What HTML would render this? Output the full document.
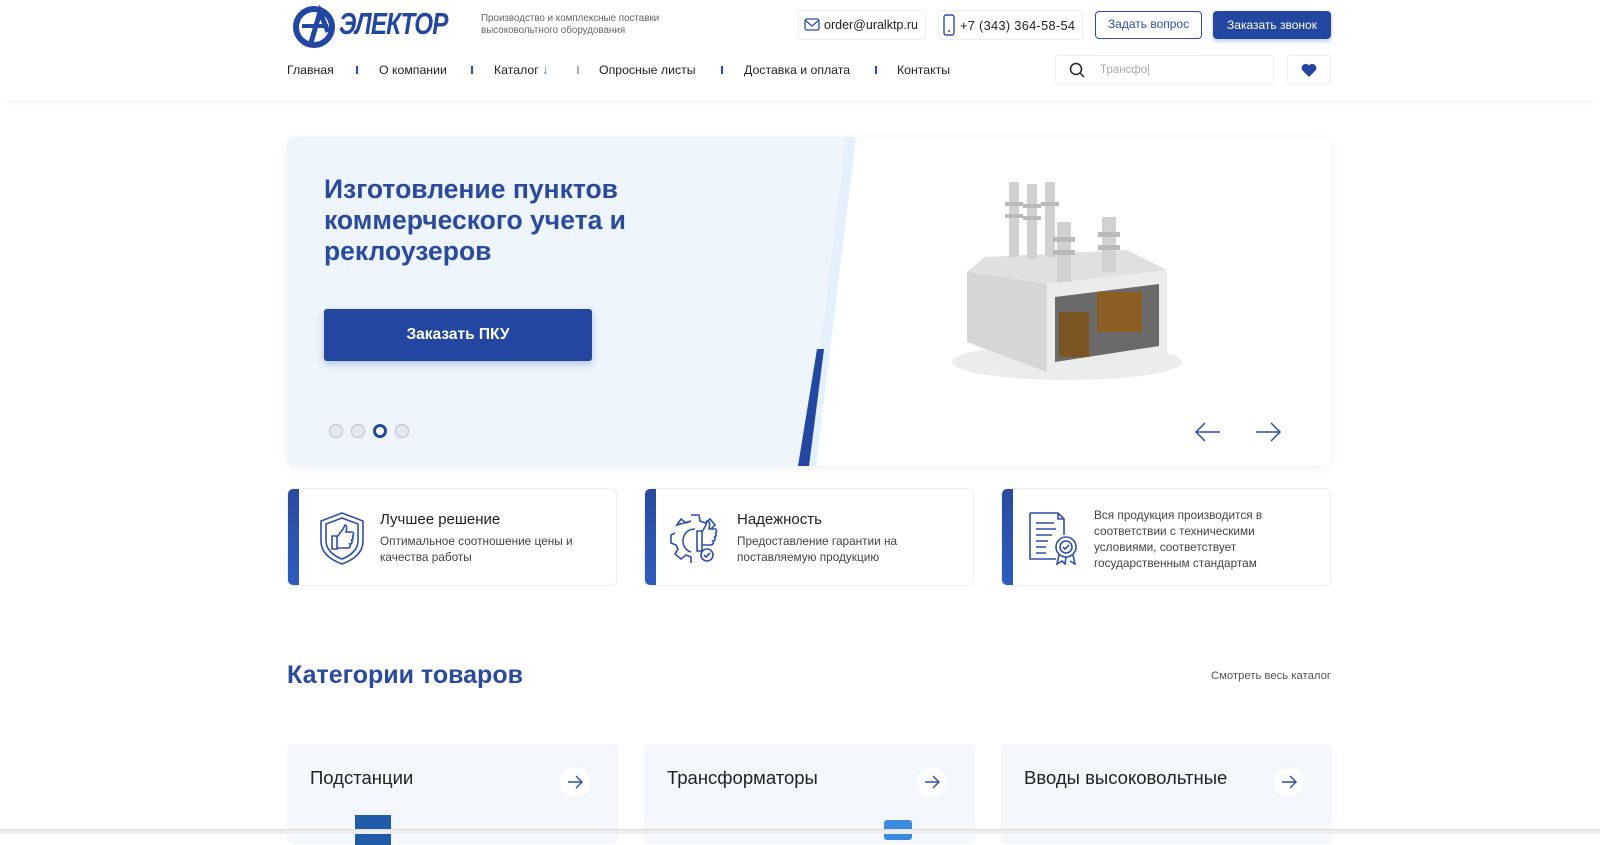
<!DOCTYPE html>
<html><head><meta charset="utf-8"><style>
*{margin:0;padding:0;box-sizing:border-box}
body{width:1600px;height:834px;overflow:hidden;background:#fff;font-family:"Liberation Sans",sans-serif;color:#222;position:relative}
.a{position:absolute}
.hdr{position:absolute;left:0;top:0;width:1600px;height:100px;background:#fff;box-shadow:0 2px 8px rgba(0,0,0,.04)}
.nav span{position:absolute;top:63px;font-size:12.3px;color:#222}
.sep{position:absolute;top:66px;width:2px;height:8px;background:#2d4fa6}
.box{position:absolute;border:1px solid #eee;border-radius:3px;background:#fff}
.card{position:absolute;top:488px;width:330px;height:98px;background:#fff;border:1px solid #eee;border-radius:6px;overflow:hidden}
.card .bar{position:absolute;left:0;top:0;width:11px;height:100%;background:linear-gradient(#2a4a9e,#2d5cc0)}
.card h3{position:absolute;left:92px;top:22px;font-size:15px;font-weight:normal;color:#222}
.card p{position:absolute;left:92px;font-size:11.8px;line-height:16px;color:#444}
.cat{position:absolute;top:744px;width:331px;height:100px;background:#f4f7fc;border-radius:6px}
.cat h4{position:absolute;left:23px;top:23px;font-size:18.5px;font-weight:normal;color:#222}
.cat .ar{position:absolute;left:273px;top:23px;width:30px;height:30px;border-radius:50%;background:#fff}
</style></head><body>
<div class="hdr"></div>
<svg class="a" style="left:292px;top:2px" width="50" height="48" viewBox="0 0 50 48"><circle cx="22" cy="25" r="18" fill="none" stroke="#2346a0" stroke-width="6"/><path d="M8 22 H34" stroke="#fff" stroke-width="5"/><path d="M10 24 H36" stroke="#2346a0" stroke-width="4"/><path d="M18 44 L28 10 L36 30" fill="none" stroke="#2346a0" stroke-width="5"/></svg>
<div class="a" style="left:339px;top:6px;font-size:31px;font-weight:bold;font-style:italic;color:#2346a0;letter-spacing:-1px;transform:scaleX(.78);transform-origin:left">ЭЛЕКТОР</div>
<div class="a" style="left:481px;top:13px;font-size:9.8px;line-height:12px;color:#666">Производство и комплексные поставки<br>высоковольтного оборудования</div>
<div class="box" style="left:798px;top:10px;width:128px;height:30px"></div>
<svg class="a" style="left:804px;top:18px" width="16" height="14"><rect x="1" y="1" width="14" height="11" rx="2" fill="none" stroke="#2d4fa6" stroke-width="1.3"/><path d="M1.5 2.5 L8 8 L14.5 2.5" fill="none" stroke="#2d4fa6" stroke-width="1.3"/></svg>
<div class="a" style="left:824px;top:18px;font-size:12.5px;color:#222">order@uralktp.ru</div>
<div class="box" style="left:938px;top:10px;width:145px;height:30px"></div>
<svg class="a" style="left:943px;top:14px" width="14" height="24"><rect x="1" y="1" width="10" height="20" rx="2" fill="none" stroke="#2d4fa6" stroke-width="1.4"/><circle cx="6" cy="17" r="1" fill="#2d4fa6"/></svg>
<div class="a" style="left:960px;top:18px;font-size:12.8px;color:#222;letter-spacing:.3px">+7 (343) 364-58-54</div>
<div class="a" style="left:1095px;top:11px;width:107px;height:28px;border:1.5px solid #2d4fa6;border-radius:4px;font-size:12px;color:#2d4fa6;text-align:center;line-height:25px">Задать вопрос</div>
<div class="a" style="left:1213px;top:11px;width:118px;height:28px;background:#2346a0;border-radius:4px;font-size:12px;color:#fff;text-align:center;line-height:28px;box-shadow:0 2px 5px rgba(35,70,160,.3)">Заказать звонок</div>
<div class="nav"><span style="left:287px">Главная</span><span style="left:379px">О компании</span><span style="left:494px">Каталог <span style="position:static;color:#2d4fa6">↓</span></span><span style="left:599px">Опросные листы</span><span style="left:744px">Доставка и оплата</span><span style="left:897px">Контакты</span></div>
<div class="sep" style="left:356px"></div><div class="sep" style="left:471px"></div><div class="sep" style="left:577px;background:#aab"></div><div class="sep" style="left:721px"></div><div class="sep" style="left:875px"></div>
<div class="box" style="left:1055px;top:55px;width:219px;height:30px"></div>
<svg class="a" style="left:1069px;top:62px" width="16" height="16"><circle cx="7" cy="7" r="5.5" fill="none" stroke="#222" stroke-width="1.5"/><path d="M11 11 L15 15" stroke="#222" stroke-width="1.5"/></svg>
<div class="a" style="left:1100px;top:64px;font-size:11.5px;color:#aaa">Трансфо|</div>
<div class="box" style="left:1287px;top:55px;width:44px;height:30px"></div>
<svg class="a" style="left:1301px;top:63px" width="16" height="14" viewBox="0 0 16 14"><path d="M8 14 L1.5 7.5 A3.8 3.8 0 0 1 8 2.5 A3.8 3.8 0 0 1 14.5 7.5 Z" fill="#2346a0"/></svg>
<div class="a" style="left:287px;top:137px;width:1044px;height:329px;border-radius:8px;background:#fff;box-shadow:0 2px 12px rgba(0,0,0,.06);overflow:hidden">
<svg class="a" style="left:0;top:0" width="1044" height="329"><polygon points="0,0 569,0 529,329 0,329" fill="#e4f1fd"/><polygon points="0,0 559,0 519,329 0,329" fill="#eff5fc"/><polygon points="530,212 537,212 522,329 511,329" fill="#2346a0"/></svg>
<div class="a" style="left:37px;top:37px;font-size:26.5px;font-weight:bold;line-height:31px;color:#2a4a9e">Изготовление пунктов<br>коммерческого учета и<br>реклоузеров</div>
<div class="a" style="left:37px;top:172px;width:268px;height:52px;background:#2346a0;border-radius:3px;color:#fff;font-size:15.5px;font-weight:bold;text-align:center;line-height:52px;box-shadow:0 3px 8px rgba(35,70,160,.3)">Заказать ПКУ</div>
<div class="a" style="left:42px;top:287px;width:14px;height:14px;border-radius:50%;background:#e4e8f0;border:1px solid #b8c0d0"></div>
<div class="a" style="left:64px;top:287px;width:14px;height:14px;border-radius:50%;background:#e4e8f0;border:1px solid #b8c0d0"></div>
<div class="a" style="left:86px;top:287px;width:14px;height:14px;border-radius:50%;background:#fff;border:3px solid #2346a0"></div>
<div class="a" style="left:108px;top:287px;width:14px;height:14px;border-radius:50%;background:#e4e8f0;border:1px solid #b8c0d0"></div>
<svg class="a" style="left:640px;top:25px" width="270" height="230" viewBox="0 0 270 230"><ellipse cx="140" cy="200" rx="115" ry="18" fill="#ececec"/><polygon points="40,110 58,95 200,88 240,108 240,190 120,210 40,180" fill="#e0e0e0"/><polygon points="40,110 120,122 120,210 40,180" fill="#d6d6d6"/><polygon points="120,122 240,108 240,190 120,210" fill="#ececec"/><polygon points="128,135 232,122 232,184 128,200" fill="#6a6a6a"/><rect x="132" y="150" width="30" height="45" fill="#7a5422"/><rect x="170" y="130" width="45" height="40" fill="#8a5e24"/><g fill="#cfd2d0"><rect x="82" y="20" width="10" height="75"/><rect x="100" y="22" width="10" height="75"/><rect x="118" y="20" width="10" height="75"/><rect x="130" y="60" width="14" height="60"/><rect x="175" y="55" width="14" height="55"/></g><g fill="#b8bbb9"><rect x="78" y="40" width="18" height="4"/><rect x="78" y="52" width="18" height="4"/><rect x="96" y="42" width="18" height="4"/><rect x="96" y="54" width="18" height="4"/><rect x="114" y="40" width="18" height="4"/><rect x="126" y="75" width="22" height="5"/><rect x="126" y="88" width="22" height="5"/><rect x="171" y="70" width="22" height="5"/><rect x="171" y="83" width="22" height="5"/></g></svg>
<svg class="a" style="left:907px;top:283px" width="110" height="24"><path d="M2 12 H26 M11 3 L2 12 L11 21" fill="none" stroke="#2d4fa6" stroke-width="1.5"/><path d="M62 12 H86 M77 3 L86 12 L77 21" fill="none" stroke="#2d4fa6" stroke-width="1.5"/></svg>
</div>
<div class="card" style="left:287px"><div class="bar"></div>
<svg class="a" style="left:30px;top:22px" width="48" height="54" viewBox="0 0 48 54" fill="none" stroke="#2d4fa6" stroke-width="1.6"><path d="M24 2 L45 10 V30 C45 42 35 49 24 53 C13 49 3 42 3 30 V10 Z"/><path d="M24 7 L40 13 V30 C40 39 32 45 24 48 C16 45 8 39 8 30 V13 Z"/><path d="M14 25 H19 V38 H14 Z M19 26 L25 18 L27 14 C29 14 29 18 28 21 H34 C36 21 36 25 34 25 C36 26 35 29 33 29 C35 30 34 33 32 33 C33 34 32 37 30 37 H19"/></svg>
<h3>Лучшее решение</h3><p style="top:44px">Оптимальное соотношение цены и<br>качества работы</p></div>
<div class="card" style="left:644px"><div class="bar"></div>
<svg class="a" style="left:24px;top:22px" width="52" height="54" viewBox="0 0 52 54" fill="none" stroke="#2d4fa6" stroke-width="1.6"><path d="M22 4 H30 L31 10 L36 12 L41 8 L46 14 L42 18 M8 14 L12 8 L17 12 L22 10 Z M6 22 L2 24 V32 L7 34 L9 38 L6 43 L12 48 L17 44 L22 46 V52"/><path d="M26 18 C18 18 14 24 14 30 C14 36 18 40 22 41"/><path d="M28 20 H33 V40 H28 Z M33 21 L37 14 L38 10 C41 10 41 14 40 18 H46 C48 18 48 22 46 22 C48 23 47 26 45 26 C47 27 46 30 44 30 C45 31 44 34 42 34 H33"/><circle cx="38" cy="44" r="6"/><path d="M35 44 L37 46 L41 42"/></svg>
<h3>Надежность</h3><p style="top:44px">Предоставление гарантии на<br>поставляемую продукцию</p></div>
<div class="card" style="left:1001px"><div class="bar"></div>
<svg class="a" style="left:24px;top:22px" width="54" height="54" viewBox="0 0 54 54" fill="none" stroke="#2d4fa6" stroke-width="1.6"><path d="M4 2 H32 L38 8 V24 M32 2 V8 H38 M4 2 V48 H30"/><path d="M10 12 H28 M10 18 H30 M10 24 H26 M10 30 H22 M10 36 H20 M10 42 H20"/><circle cx="40" cy="36" r="10"/><circle cx="40" cy="36" r="6"/><path d="M37 36 L39 38 L43 34 M33 44 L31 53 L36 50 L39 53 L40 46 M47 44 L49 53 L44 50"/></svg>
<p style="top:18px;left:92px">Вся продукция производится в<br>соответствии с техническими<br>условиями, соответствует<br>государственным стандартам</p></div>
<div class="a" style="left:287px;top:661px;font-size:25px;font-weight:bold;color:#2a4a9e">Категории товаров</div>
<div class="a" style="left:1204px;top:670px;font-size:11.3px;color:#555;width:127px;text-align:right">Смотреть весь каталог</div>
<div class="cat" style="left:287px"><h4>Подстанции</h4><div class="ar"><svg width="30" height="30"><path d="M8 15 H22 M16 9 L22 15 L16 21" fill="none" stroke="#2d4fa6" stroke-width="1.4"/></svg></div><div class="a" style="left:68px;top:71px;width:36px;height:30px;background:#1f5ba8"></div></div>
<div class="cat" style="left:644px"><h4>Трансформаторы</h4><div class="ar"><svg width="30" height="30"><path d="M8 15 H22 M16 9 L22 15 L16 21" fill="none" stroke="#2d4fa6" stroke-width="1.4"/></svg></div><div class="a" style="left:240px;top:76px;width:28px;height:20px;background:#3b8ae0;border-radius:3px"></div></div>
<div class="cat" style="left:1001px"><h4>Вводы высоковольтные</h4><div class="ar"><svg width="30" height="30"><path d="M8 15 H22 M16 9 L22 15 L16 21" fill="none" stroke="#2d4fa6" stroke-width="1.4"/></svg></div></div>
<div class="a" style="left:0;top:829px;width:1600px;height:5px;background:#ededed;border-top:1px solid #ddd"></div>
</body></html>
